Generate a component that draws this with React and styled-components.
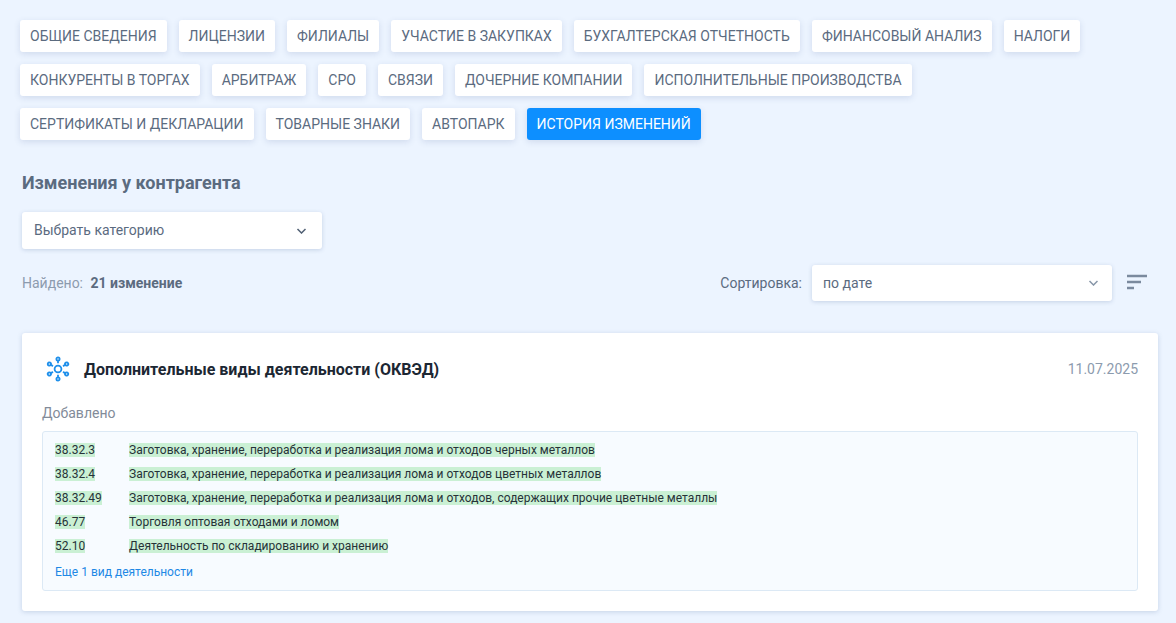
import React from 'react';
import styled, { createGlobalStyle } from 'styled-components';

const tabs = [
  "Общие сведения",
  "Лицензии",
  "Филиалы",
  "Участие в закупках",
  "Бухгалтерская отчетность",
  "Финансовый анализ",
  "Налоги",
  "Конкуренты в торгах",
  "Арбитраж",
  "СРО",
  "Связи",
  "Дочерние компании",
  "Исполнительные производства",
  "Сертификаты и декларации",
  "Товарные знаки",
  "Автопарк",
  "История изменений"
];

const activities = [
  { code: "38.32.3", name: "Заготовка, хранение, переработка и реализация лома и отходов черных металлов" },
  { code: "38.32.4", name: "Заготовка, хранение, переработка и реализация лома и отходов цветных металлов" },
  { code: "38.32.49", name: "Заготовка, хранение, переработка и реализация лома и отходов, содержащих прочие цветные металлы" },
  { code: "46.77", name: "Торговля оптовая отходами и ломом" },
  { code: "52.10", name: "Деятельность по складированию и хранению" }
];

const Chevron = () => (
  <svg width="10" height="6" viewBox="0 0 10 6" fill="none" aria-hidden="true">
    <path d="M1.5 1L5.5 5l4-4" stroke="currentColor" strokeWidth="1.5" />
  </svg>
);

const SortIcon = () => (
  <svg width="22" height="16" viewBox="0 0 22 16" fill="none" aria-hidden="true">
    <path d="M1 2h20M1 8h14M1 14h7" stroke="currentColor" strokeWidth="2.4" />
  </svg>
);

// Hub with six satellites, every one 60 degrees from the next
const HubIcon = () => (
  <svg width="25" height="26" viewBox="0 0 25 26" fill="none" stroke="#1e8fea" strokeWidth="1.8" aria-hidden="true">
    <circle cx="12" cy="13" r="3.4" />
    {[0, 60, 120, 180, 240, 300].map((angle) => (
      <g key={angle} transform={`rotate(${angle} 12 13)`}>
        <circle cx="12" cy="3" r="1.6" />
        <path d="M12 4.6v2.6" />
      </g>
    ))}
  </svg>
);

const App = () => {
  return (
    <Page>
      <GlobalStyle />
      <Tabs>
        {tabs.map((tab) => (
          <Tab key={tab} href="#" $active={tab === "История изменений"}>{tab}</Tab>
        ))}
      </Tabs>
      <Content>
        <Title>Изменения у контрагента</Title>
        <SelectBox>
          <Select aria-label="Категория">
            <option>Выбрать категорию</option>
          </Select>
          <Arrow><Chevron /></Arrow>
        </SelectBox>
        <Summary>
          <Found>Найдено: <Count>21 изменение</Count></Found>
          <Sorting>
            <SortLabel htmlFor="sort">Сортировка:</SortLabel>
            <SelectBox>
              <Select id="sort" $compact>
                <option>по дате</option>
              </Select>
              <Arrow $muted><Chevron /></Arrow>
            </SelectBox>
            <SortButton type="button" aria-label="Порядок сортировки"><SortIcon /></SortButton>
          </Sorting>
        </Summary>
        <Card>
          <CardHeader>
            <HubIcon />
            <CardTitle>Дополнительные виды деятельности (ОКВЭД)</CardTitle>
            <CardDate>11.07.2025</CardDate>
          </CardHeader>
          <Caption>Добавлено</Caption>
          <Panel>
            <Table>
              <tbody>
                {activities.map((activity) => (
                  <tr key={activity.code}>
                    <CodeCell><Added>{activity.code}</Added></CodeCell>
                    <Cell><Added>{activity.name}</Added></Cell>
                  </tr>
                ))}
              </tbody>
            </Table>
            <MoreLink href="#">Еще 1 вид деятельности</MoreLink>
          </Panel>
        </Card>
      </Content>
    </Page>
  );
};

export default App;

// Styled Components

const GlobalStyle = createGlobalStyle`
  * {
    box-sizing: border-box;
  }

  body {
    margin: 0;
    background: #ecf4ff;
    color: #5b6b7f;
    font-family: Roboto, "Liberation Sans", sans-serif;
    font-size: 14px;
  }
`;

const Page = styled.main`
  padding: 20px 18px 12px 20px;
`;

const Tabs = styled.nav`
  display: flex;
  flex-wrap: wrap;
  gap: 12px;
  padding-right: 20px;
`;

const Tab = styled.a`
  padding: 0 10px;
  border-radius: 3px;
  background: ${({ $active }) => ($active ? '#0d8fff' : '#fff')};
  color: ${({ $active }) => ($active ? '#fff' : '#5b6b7f')};
  line-height: 32px;
  text-decoration: none;
  text-transform: uppercase;
  box-shadow: 0 2px 6px rgba(60, 90, 140, 0.16);
`;

const Content = styled.section`
  padding: 32px 0 0 2px;
`;

const Title = styled.h1`
  margin: 0 0 18px;
  font-size: 18px;
  font-weight: bold;
  line-height: 22px;
`;

const SelectBox = styled.div`
  display: grid;
  align-items: center;
  width: 300px;
`;

const Select = styled.select`
  grid-area: 1 / 1;
  width: 100%;
  height: ${({ $compact }) => ($compact ? '36px' : '37px')};
  padding: 0 ${({ $compact }) => ($compact ? '11px' : '12px')} 1px;
  border: none;
  border-radius: 3px;
  appearance: none;
  background: #fff;
  color: inherit;
  font: inherit;
  box-shadow: 0 1px 4px rgba(60, 90, 140, 0.22);
`;

const Arrow = styled.span`
  grid-area: 1 / 1;
  display: flex;
  justify-self: end;
  margin-right: ${({ $muted }) => ($muted ? '14px' : '16px')};
  color: ${({ $muted }) => ($muted ? '#8796a8' : '#4f5f73')};
  pointer-events: none;
`;

const Summary = styled.div`
  display: flex;
  align-items: center;
  justify-content: space-between;
  margin: 16px 0 32px;
`;

const Found = styled.div`
  color: #8c9bae;
  line-height: 18px;
`;

const Count = styled.strong`
  margin-left: 4px;
  color: #5b6b7f;
`;

const Sorting = styled.div`
  display: flex;
  align-items: center;
  gap: 10px;
  padding-right: 10px;
`;

const SortLabel = styled.label`
  line-height: 16px;
`;

const SortButton = styled.button`
  display: flex;
  padding: 0 0 2px 4px;
  border: none;
  background: none;
  color: #7b8a9e;
  cursor: pointer;
`;

const Card = styled.article`
  padding: 20px;
  border-radius: 3px;
  background: #fff;
  box-shadow: 0 1px 5px rgba(60, 90, 140, 0.22);
`;

const CardHeader = styled.header`
  display: flex;
  align-items: center;
  gap: 13px;
  height: 32px;
  padding-left: 4px;
`;

const CardTitle = styled.h2`
  flex: 1;
  margin: 0;
  color: #1c2733;
  font-size: 16px;
  font-weight: bold;
`;

const CardDate = styled.time`
  color: #8c9bae;
`;

const Caption = styled.div`
  margin: 20px 0 10px;
  color: #828b99;
  line-height: 16px;
`;

const Panel = styled.div`
  padding: 6px 12px 9px;
  border: 1px solid #dce9f5;
  border-radius: 3px;
  background: #f7fbff;
  font-size: 12px;
`;

const Table = styled.table`
  border-collapse: collapse;
`;

const Cell = styled.td`
  height: 24px;
  padding: 0;
`;

const CodeCell = styled(Cell)`
  width: 74px;
`;

const Added = styled.ins`
  background: #caf0d4;
  color: #263238;
  text-decoration: none;
`;

const MoreLink = styled.a`
  display: inline-block;
  margin-top: 5px;
  color: #1e88e5;
  line-height: 18px;
  text-decoration: none;
`;
